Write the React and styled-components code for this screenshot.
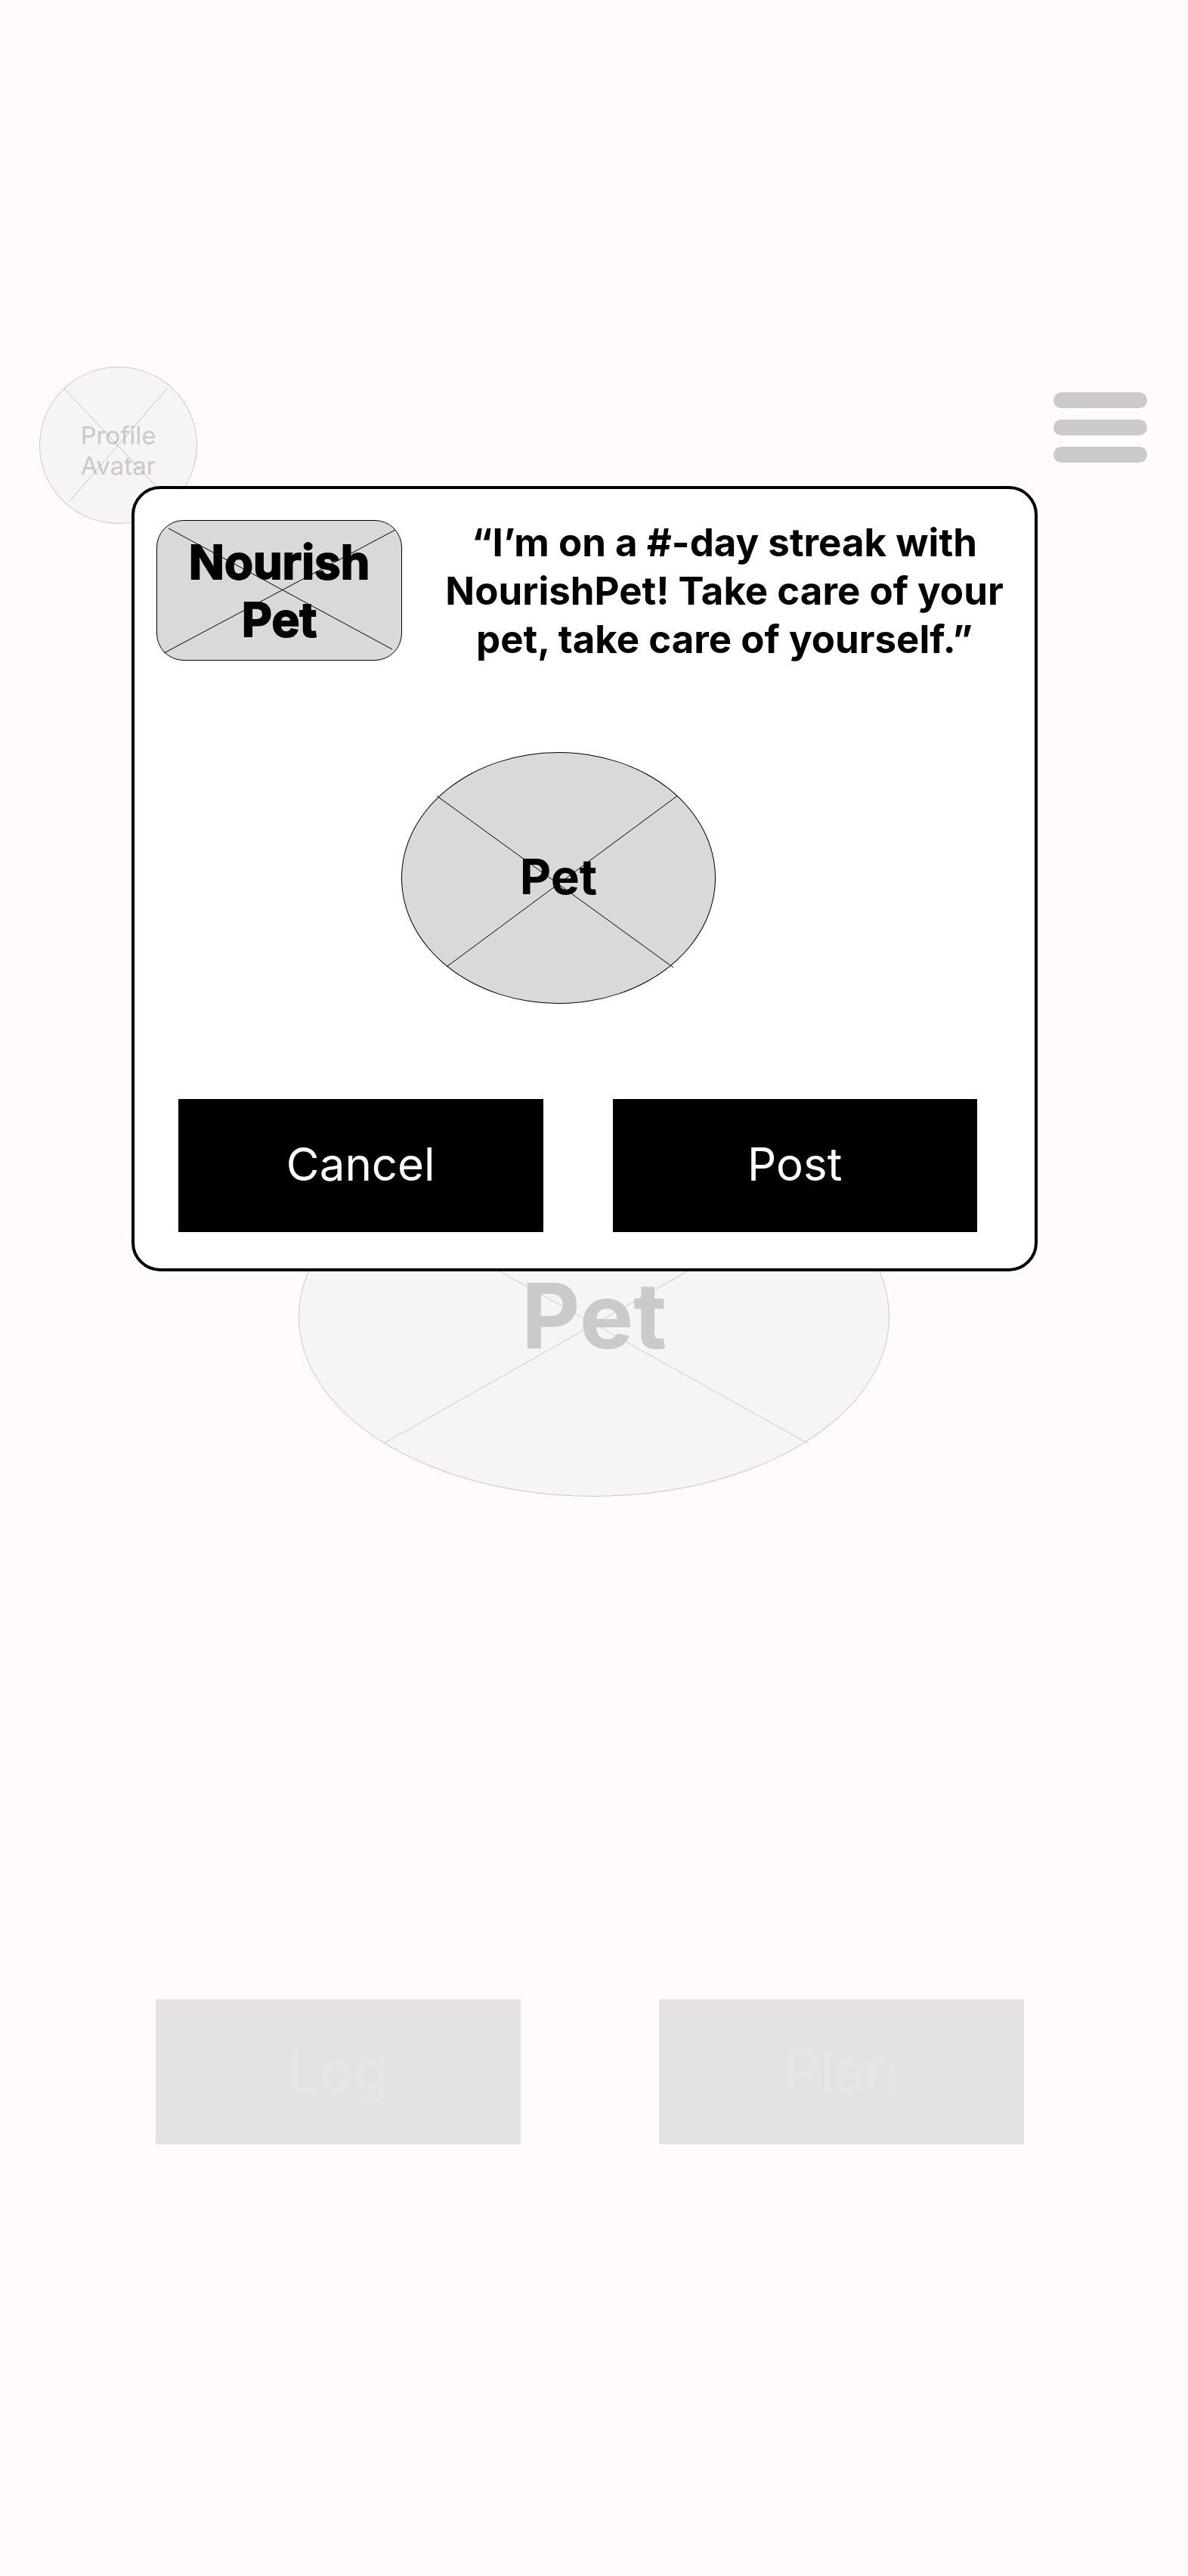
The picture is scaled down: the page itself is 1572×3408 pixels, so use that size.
import React from "react";
import styled, { createGlobalStyle } from "styled-components";

const GlobalStyle = createGlobalStyle`
  * { box-sizing: border-box; }
  body {
    margin: 0;
    background: #fffbfa;
    color: #000;
    font-family: Inter, "Liberation Sans", sans-serif;
  }
`;

const Screen = styled.div`
  position: relative;
  min-height: 100vh;
  padding-bottom: 571px;
`;

const Header = styled.header`
  display: flex;
  justify-content: space-between;
  align-items: flex-start;
  padding: 485px 54px 0 52px;
`;

const Figure = styled.div`
  display: grid;
  place-items: center;
  width: ${(p) => p.$width}px;
  height: ${(p) => p.$height}px;
  max-width: 100%;
  border: 1px solid ${(p) => (p.$muted ? "#cbcac8" : "#000")};
  border-radius: ${(p) => p.$radius || "50%"};
  background: ${(p) => (p.$muted ? "#f6f5f3" : "#d9d9d9")};
  color: ${(p) => (p.$muted ? "#cbcac8" : "#000")};

  > * { grid-area: 1 / 1; }
`;

const Cross = styled.svg`
  width: 100%;
  height: 100%;
  overflow: visible;
  fill: none;
  stroke: ${(p) => p.$stroke};
  stroke-width: 1;
`;

const Label = styled.span`
  padding-top: ${(p) => p.$drop || 0}px;
  padding-bottom: ${(p) => p.$lift || 0}px;
  font-size: ${(p) => p.$size}px;
  line-height: ${(p) => p.$line}px;
  font-weight: ${(p) => p.$weight || 700};
  text-align: center;
  -webkit-text-stroke: ${(p) => (p.$heavy ? "2px #000" : "0")};
`;

const MenuButton = styled.button`
  display: grid;
  gap: 15px;
  width: 124px;
  margin-top: 34px;
  padding: 0;
  border: 0;
  background: none;
`;

const MenuBar = styled.span`
  height: 21px;
  border-radius: 11px;
  background: #cbcac8;
`;

const PetStage = styled.main`
  display: flex;
  justify-content: center;
  padding-top: 811px;
`;

const Actions = styled.nav`
  display: grid;
  grid-template-columns: 1fr 1fr;
  gap: 183px;
  padding: 665px 217px 0 206px;
`;

const BlockButton = styled.button`
  height: ${(p) => (p.$muted ? 192 : 176)}px;
  padding: 0 0 4px;
  border: 0;
  background: ${(p) => (p.$muted ? "#e4e3e1" : "#000")};
  color: ${(p) => (p.$muted ? "#e6e5e3" : "#fff")};
  font-family: inherit;
  font-size: ${(p) => (p.$muted ? 75 : 60)}px;
  font-weight: 400;
`;

const Overlay = styled.div`
  position: absolute;
  inset: 0;
  padding: 643px 199px 0 174px;
`;

const Dialog = styled.section`
  padding: 37px 28px 48px 29px;
  border: 4px solid #000;
  border-radius: 38px;
  background: #fff;
`;

const ShareHeader = styled.div`
  display: grid;
  grid-template-columns: 325px 1fr;
  align-items: center;
  gap: 44px;
`;

const Quote = styled.p`
  margin: 0;
  padding-top: 2px;
  font-size: 51px;
  line-height: 64px;
  font-weight: 700;
  text-align: center;
`;

const SharePet = styled.div`
  display: flex;
  justify-content: center;
  padding: 117px 70px 126px 0;
`;

const ShareActions = styled.div`
  display: grid;
  grid-template-columns: 1fr 1fr;
  gap: 92px;
  padding: 0 48px 0 29px;
`;

export default function App() {
  return (
    <Screen>
      <GlobalStyle />
      <Header>
        <Figure $width={209} $height={208} $muted>
          <Label $size={33} $line={40} $weight={400} $drop={13}>
            Profile
            <br />
            Avatar
          </Label>
          <Cross viewBox="0 0 207 206" $stroke="rgba(0, 0, 0, 0.2)" aria-hidden="true">
            <path d="M32 28 L170 175 M168 28 L39 177" />
          </Cross>
        </Figure>
        <MenuButton type="button" aria-label="Menu">
          <MenuBar />
          <MenuBar />
          <MenuBar />
        </MenuButton>
      </Header>

      <PetStage>
        <Figure $width={782} $height={476} $muted>
          <Cross viewBox="0 0 780 474" $stroke="#cbcac8" aria-hidden="true">
            <path d="M113 404 L667 90 M674 405 L113 92" />
          </Cross>
          <Label $size={120} $line={145} $lift={3}>Pet</Label>
        </Figure>
      </PetStage>

      <Actions>
        <BlockButton type="button" $muted>Log</BlockButton>
        <BlockButton type="button" $muted>Plan</BlockButton>
      </Actions>

      <Overlay>
        <Dialog role="dialog" aria-label="Share your streak">
          <ShareHeader>
            <Figure $width={325} $height={186} $radius="36px">
              <Cross viewBox="0 0 323 184" $stroke="#000" aria-hidden="true">
                <path d="M15 10 L311 170 M315 12 L9 175" />
              </Cross>
              <Label $size={62} $line={76} $drop={2} $heavy>
                Nourish
                <br />
                Pet
              </Label>
            </Figure>
            <Quote>
              “I’m on a #-day streak with NourishPet! Take care of your pet, take care of yourself.”
            </Quote>
          </ShareHeader>
          <SharePet>
            <Figure $width={416} $height={333}>
              <Cross viewBox="0 0 414 331" $stroke="#000" aria-hidden="true">
                <path d="M46 57 L359 284 M364 57 L59 283" />
              </Cross>
              <Label $size={64} $line={76} $lift={3}>Pet</Label>
            </Figure>
          </SharePet>
          <ShareActions>
            <BlockButton type="button">Cancel</BlockButton>
            <BlockButton type="button">Post</BlockButton>
          </ShareActions>
        </Dialog>
      </Overlay>
    </Screen>
  );
}
